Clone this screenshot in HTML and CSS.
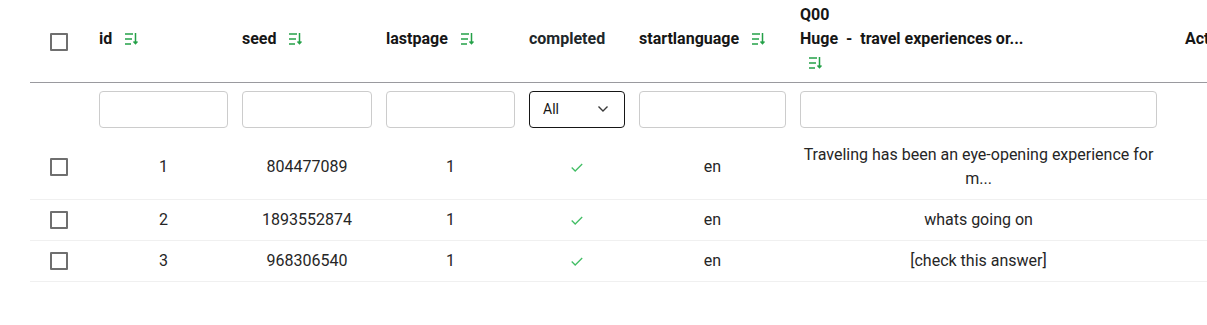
FILE: index.html
```html
<!DOCTYPE html>
<html lang="en">
<head>
    <meta charset="UTF-8">
    <meta name="viewport" content="width=device-width, initial-scale=1.0">
    <title>Responses</title>
    <link rel="stylesheet" href="styles.css">
</head>
<body>
    <div class="table-wrap">
        <table class="data-table">
            <colgroup>
                <col class="col-select">
                <col class="col-id">
                <col class="col-seed">
                <col class="col-lastpage">
                <col class="col-completed">
                <col class="col-lang">
                <col class="col-q00">
                <col class="col-actions">
            </colgroup>
            <thead>
                <tr class="head-row">
                    <th class="select-cell"><span class="checkbox"></span></th>
                    <th>id <svg class="sort-icon" width="13" height="12" viewBox="0 0 13 12"><path d="M0 1h8M0 6h7M0 11h6" /><path d="M10.5 0v10.5M8.5 8.5l2 2.2 2-2.2" /></svg></th>
                    <th>seed <svg class="sort-icon" width="13" height="12" viewBox="0 0 13 12"><path d="M0 1h8M0 6h7M0 11h6" /><path d="M10.5 0v10.5M8.5 8.5l2 2.2 2-2.2" /></svg></th>
                    <th>lastpage <svg class="sort-icon" width="13" height="12" viewBox="0 0 13 12"><path d="M0 1h8M0 6h7M0 11h6" /><path d="M10.5 0v10.5M8.5 8.5l2 2.2 2-2.2" /></svg></th>
                    <th class="muted">completed</th>
                    <th>startlanguage <svg class="sort-icon" width="13" height="12" viewBox="0 0 13 12"><path d="M0 1h8M0 6h7M0 11h6" /><path d="M10.5 0v10.5M8.5 8.5l2 2.2 2-2.2" /></svg></th>
                    <th class="multi">
                        <span class="label">Q00<br>Huge &nbsp;- &nbsp;travel experiences or...</span>
                        <svg class="sort-icon" width="13" height="12" viewBox="0 0 13 12"><path d="M0 1h8M0 6h7M0 11h6" /><path d="M10.5 0v10.5M8.5 8.5l2 2.2 2-2.2" /></svg>
                    </th>
                    <th class="actions-head">Actions</th>
                </tr>
            </thead>
            <tbody>
                <tr class="filter-row">
                    <td></td>
                    <td><input class="filter-input" type="text"></td>
                    <td><input class="filter-input" type="text"></td>
                    <td><input class="filter-input" type="text"></td>
                    <td>
                        <div class="select-box">
                            <span>All</span>
                            <svg width="10" height="6" viewBox="0 0 10 6"><path d="M0.5 0.5l4.5 4.5 4.5-4.5" /></svg>
                        </div>
                    </td>
                    <td><input class="filter-input" type="text"></td>
                    <td><input class="filter-input" type="text"></td>
                    <td></td>
                </tr>
                <tr class="data-row">
                    <td class="select-cell"><span class="checkbox"></span></td>
                    <td>1</td>
                    <td>804477089</td>
                    <td>1</td>
                    <td><svg class="check" width="12" height="9" viewBox="0 0 12 9"><path d="M0.7 4.5l3.5 3.5 7-7" /></svg></td>
                    <td>en</td>
                    <td>Traveling has been an eye-opening experience for m...</td>
                    <td></td>
                </tr>
                <tr class="data-row">
                    <td class="select-cell"><span class="checkbox"></span></td>
                    <td>2</td>
                    <td>1893552874</td>
                    <td>1</td>
                    <td><svg class="check" width="12" height="9" viewBox="0 0 12 9"><path d="M0.7 4.5l3.5 3.5 7-7" /></svg></td>
                    <td>en</td>
                    <td>whats going on</td>
                    <td></td>
                </tr>
                <tr class="data-row">
                    <td class="select-cell"><span class="checkbox"></span></td>
                    <td>3</td>
                    <td>968306540</td>
                    <td>1</td>
                    <td><svg class="check" width="12" height="9" viewBox="0 0 12 9"><path d="M0.7 4.5l3.5 3.5 7-7" /></svg></td>
                    <td>en</td>
                    <td>[check this answer]</td>
                    <td></td>
                </tr>
            </tbody>
        </table>
    </div>
</body>
</html>
```

FILE: styles.css
```css
body {
    font-family: Roboto, 'Liberation Sans', Arial, sans-serif;
    margin: 0;
    padding: 0;
    background: #ffffff;
    color: #262626;
    overflow: hidden;
}

.table-wrap {
    padding-left: 30px;
    width: 1300px;
}

.data-table {
    border-collapse: collapse;
    table-layout: fixed;
    width: 1270px;
    font-size: 16px;
    line-height: 24px;
}

.col-select { width: 62px; }
.col-id { width: 143px; }
.col-seed { width: 144px; }
.col-lastpage { width: 143px; }
.col-completed { width: 110px; }
.col-lang { width: 161px; }
.col-q00 { width: 371px; }
.col-actions { width: 136px; }

.head-row {
    height: 82px;
    border-bottom: 1px solid #9a9a9f;
}

.head-row th {
    text-align: left;
    font-weight: 700;
    color: #161616;
    padding: 0 7px 4px;
    vertical-align: middle;
    white-space: nowrap;
}

.head-row th.muted {
    color: #21272a;
}

.head-row th.multi .label {
    display: block;
}

.head-row th.multi .sort-icon {
    margin-left: 9px;
}

.head-row th.actions-head {
    padding-left: 21px;
}

.head-row th.select-cell,
.data-row td.select-cell {
    padding: 0 0 0 20px;
    text-align: left;
}

.sort-icon {
    fill: none;
    stroke: #24a148;
    stroke-width: 1.5;
    margin-left: 9px;
    vertical-align: -1px;
}

.checkbox {
    display: inline-block;
    width: 14px;
    height: 14px;
    border: 2px solid #6f6f6f;
    border-radius: 1px;
    vertical-align: middle;
}

.filter-row td {
    padding: 8px 7px 7px;
}

.filter-input {
    display: block;
    box-sizing: border-box;
    width: 100%;
    height: 37px;
    margin: 0;
    border: 1px solid #cccccc;
    border-radius: 4px;
    background: #ffffff;
}

.select-box {
    box-sizing: border-box;
    height: 37px;
    border: 1px solid #161616;
    border-radius: 4px;
    display: flex;
    align-items: center;
    justify-content: space-between;
    padding: 0 16px 0 13px;
    font-size: 14px;
    color: #161616;
}

.select-box svg {
    fill: none;
    stroke: #393939;
    stroke-width: 1.4;
}

.data-row td {
    text-align: center;
    padding: 8px 7px;
    border-bottom: 1px solid #f0f0f0;
    vertical-align: middle;
}

.check {
    fill: none;
    stroke: #42be65;
    stroke-width: 1.3;
    vertical-align: middle;
}
```
